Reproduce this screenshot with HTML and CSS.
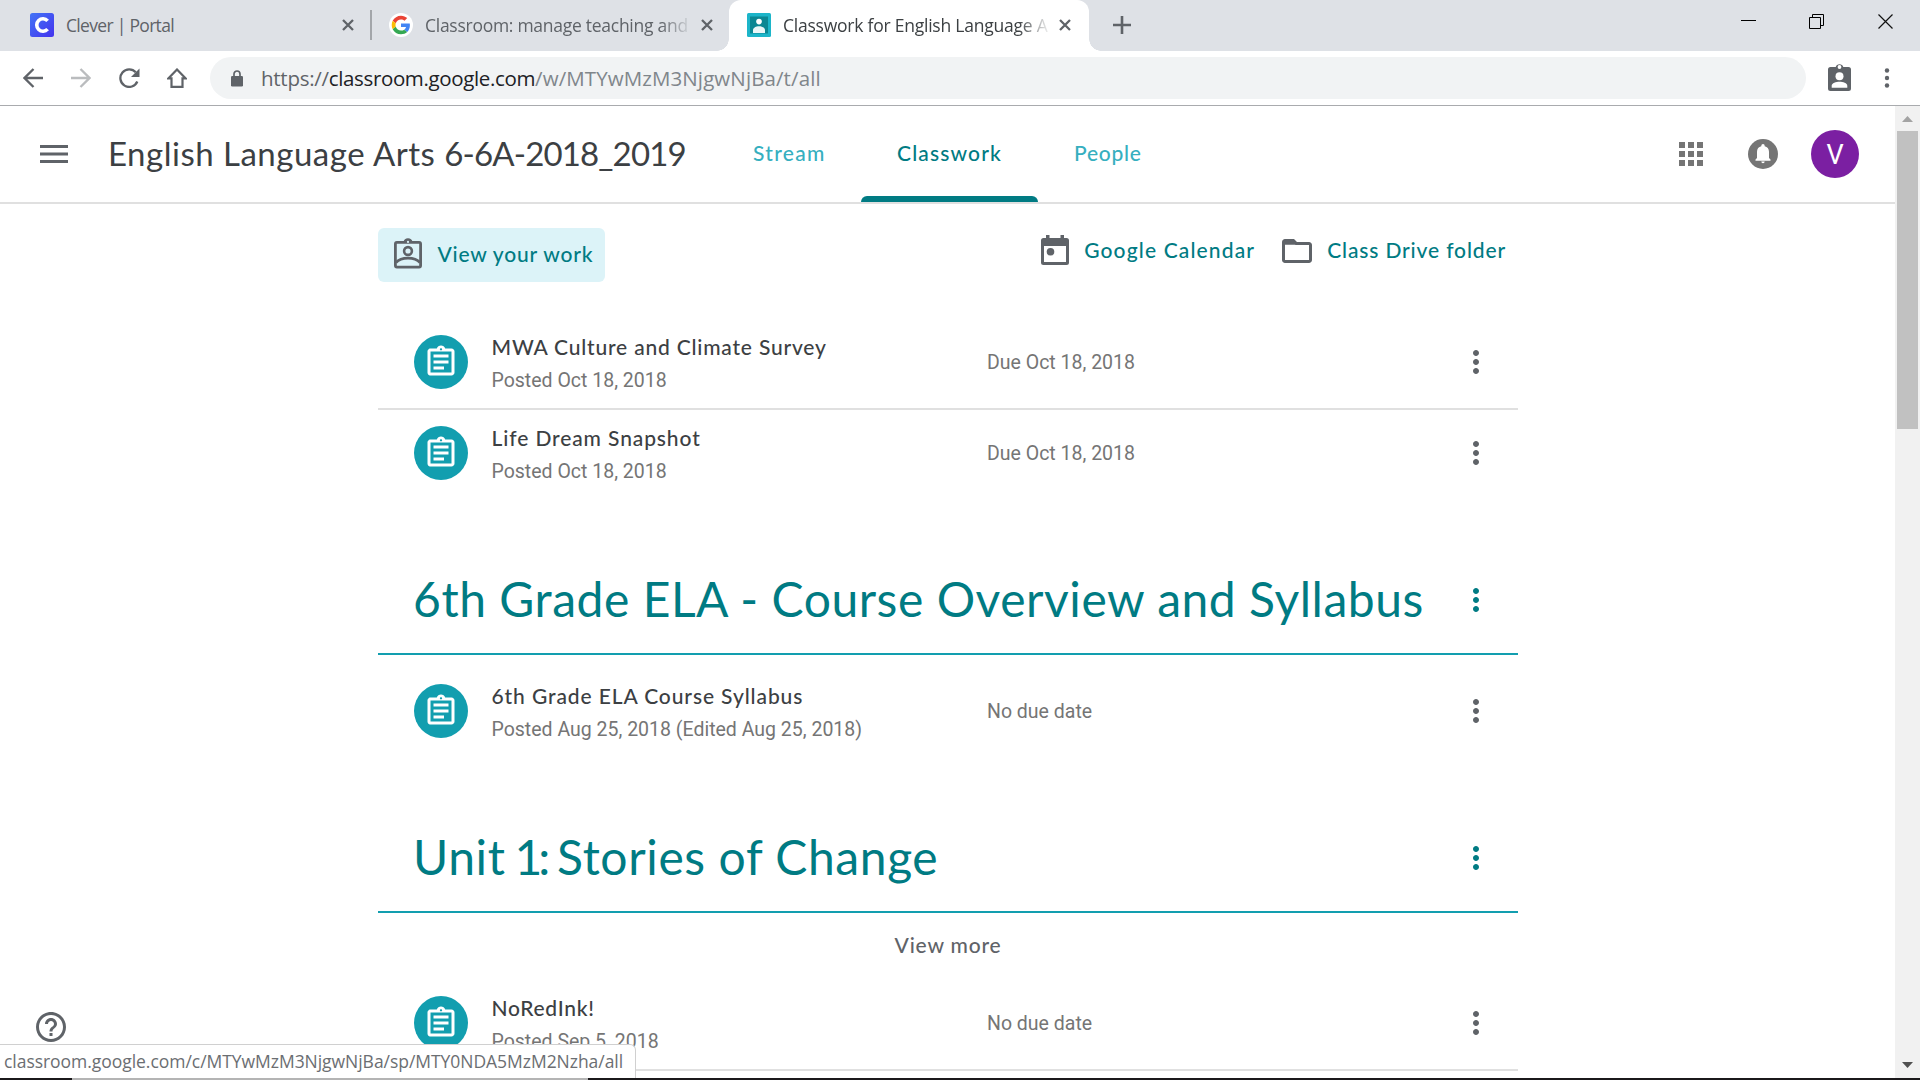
FILE: index.html
```html
<!DOCTYPE html>
<html lang="en">
<head>
<meta charset="utf-8">
<title>Classwork for English Language Arts 6-6A-2018_2019</title>
<link rel="stylesheet" href="styles.css">
</head>
<body>
<svg class="defs" width="0" height="0">
  <symbol id="assignment" viewBox="0 0 24 24"><path d="M7 15h7v2H7zm0-4h10v2H7zm0-4h10v2H7zm12-4h-4.180C14.400 1.840 13.300 1 12 1s-2.400.84-2.820 2H5c-.14 0-.27.01-.4.04-.39.08-.74.28-1.010.55-.18.18-.33.4-.43.64S3 4.720 3 5v14c0 .27.06.54.16.78s.25.45.43.64c.27.27.62.47 1.010.55.13.02.26.03.4.03h14c1.100 0 2-.9 2-2V5c0-1.100-.9-2-2-2zm-7-.25c.41 0 .75.34.75.75s-.34.75-.75.75-.75-.34-.75-.75.34-.75.75-.75zM19 19H5V5h14v14z"/></symbol>
  <symbol id="more" viewBox="0 0 24 24"><path d="M12 8c1.100 0 2-.9 2-2s-.9-2-2-2-2 .9-2 2 .9 2 2 2zm0 2c-1.100 0-2 .9-2 2s.9 2 2 2 2-.9 2-2-.9-2-2-2zm0 6c-1.100 0-2 .9-2 2s.9 2 2 2 2-.9 2-2-.9-2-2-2z"/></symbol>
  <symbol id="close" viewBox="0 0 14 14"><path d="M2 2l10 10M12 2L2 12" fill="none" stroke="#5f6368" stroke-width="2.300"/></symbol>
</svg>

<div class="tabstrip">
  <div class="tab tab-first">
    <svg class="favicon" viewBox="0 0 24 24"><defs><linearGradient id="cg" x1="0" y1="0" x2="1" y2="1"><stop offset="0" stop-color="#4274f6"/><stop offset="1" stop-color="#4433ee"/></linearGradient></defs><rect width="24" height="24" rx="2.500" fill="url(#cg)"/><path d="M17.600 7.900A6.200 6.200 0 1 0 17.600 16.100" fill="none" stroke="#fff" stroke-width="3.600"/></svg>
    <span class="tab-title clever">Clever | Portal</span>
    <svg class="tab-close"><use href="#close"/></svg>
  </div>
  <div class="tab tab-second">
    <svg class="favicon" viewBox="0 0 24 24"><circle cx="12" cy="12" r="12" fill="#fff"/><g transform="translate(2.700 2.700) scale(.3875)"><path fill="#EA4335" d="M24 9.500c3.540 0 6.710 1.220 9.210 3.600l6.850-6.850C35.900 2.380 30.470 0 24 0 14.620 0 6.510 5.380 2.560 13.220l7.980 6.190C12.430 13.720 17.740 9.500 24 9.500z"/><path fill="#4285F4" d="M46.980 24.550c0-1.570-.15-3.090-.38-4.550H24v9.020h12.940c-.58 2.960-2.260 5.480-4.780 7.180l7.730 6c4.510-4.180 7.090-10.360 7.090-17.650z"/><path fill="#FBBC05" d="M10.530 28.590c-.48-1.450-.76-2.990-.76-4.590s.27-3.140.76-4.590l-7.980-6.190C.92 16.460 0 20.120 0 24c0 3.880.92 7.540 2.560 10.780l7.970-6.190z"/><path fill="#34A853" d="M24 48c6.480 0 11.930-2.130 15.890-5.810l-7.730-6c-2.150 1.450-4.920 2.300-8.160 2.300-6.260 0-11.570-4.220-13.470-9.910l-7.980 6.190C6.510 42.620 14.620 48 24 48z"/></g></svg>
    <span class="tab-title fade manage">Classroom: manage teaching and</span>
    <svg class="tab-close"><use href="#close"/></svg>
  </div>
  <div class="tab tab-active">
    <svg class="favicon" viewBox="0 0 24 24"><rect width="24" height="24" rx="1.500" fill="#1cb5c9"/><rect x="3" y="3.500" width="18" height="17" fill="#0b8793"/><circle cx="12" cy="8.600" r="2.800" fill="#fff"/><path d="M6 20v-3c0-2.200 3-3.800 6-3.800s6 1.600 6 3.800v3z" fill="#e9f6f7"/></svg>
    <span class="tab-title fade classwork-tab">Classwork for English Language A</span>
    <svg class="tab-close"><use href="#close"/></svg>
  </div>
  <svg class="new-tab" viewBox="0 0 18 18"><path d="M9 0v18M0 9h18" stroke="#5f6368" stroke-width="2.600"/></svg>
  <svg class="window-controls" viewBox="0 0 152 15"><path d="M0 6.500h15" stroke="#000"/><path d="M68.500 3.500h11v11h-11zM71.500 3.500v-3h11v11h-3" fill="none" stroke="#000"/><path d="M137.500.5l14 14M151.500.5l-14 14" stroke="#111" stroke-width="1.200"/></svg>
</div>

<div class="toolbar">
  <svg class="nav-back" viewBox="0 0 20 20"><path d="M20 10H2M10.500 1L1.500 10l9 9" fill="none" stroke="#5f6368" stroke-width="2.300"/></svg>
  <svg class="nav-forward" viewBox="0 0 20 20"><path d="M0 10h18M9.500 1l9 9-9 9" fill="none" stroke="#babcbe" stroke-width="2.300"/></svg>
  <svg class="nav-reload" viewBox="0 0 21 20"><path d="M18.300 13.500A8.800 8.800 0 1 1 16.800 4.300" fill="none" stroke="#5f6368" stroke-width="2.300"/><path d="M20.500 .5v8.500h-8.500z" fill="#5f6368"/></svg>
  <svg class="nav-home" viewBox="0 0 20 20"><path d="M10 1.500L1.500 10.300h3v8.600h11v-8.600h3z" fill="none" stroke="#5f6368" stroke-width="2.200"/></svg>
  <div class="omnibox">
    <svg class="lock" viewBox="0 0 12 17"><rect y="6" width="12" height="10.500" rx="1.300" fill="#5f6368"/><path d="M3 7V4a3 3 0 0 1 6 0v3" fill="none" stroke="#5f6368" stroke-width="1.700"/></svg>
    <span class="url"><span class="scheme">https://</span><span class="host">classroom.google.com</span><span class="path">/w/MTYwMzM3NjgwNjBa/t/all</span></span>
  </div>
  <svg class="profile" viewBox="0 0 23 28"><path d="M2.500 4h5.200a4 4 0 0 1 7.600 0h5.200A2.500 2.500 0 0 1 23 6.500v19a2.500 2.500 0 0 1-2.500 2.500h-18A2.500 2.500 0 0 1 0 25.500v-19A2.500 2.500 0 0 1 2.500 4z" fill="#5f6368"/><circle cx="11.500" cy="4" r="1.900" fill="#fff"/><circle cx="11.500" cy="13.200" r="4" fill="#fff"/><path d="M3.700 24.800v-2c0-2.600 4.300-4 7.800-4s7.800 1.400 7.800 4v2z" fill="#fff"/></svg>
  <svg class="menu-dots" viewBox="0 0 6 20"><g fill="#5f6368"><circle cx="3" cy="2.500" r="2.200"/><circle cx="3" cy="10" r="2.200"/><circle cx="3" cy="17.500" r="2.200"/></g></svg>
</div>

<div class="viewport">
  <div class="page">
    <header class="app-header">
      <svg class="hamburger" viewBox="0 0 28 18"><path d="M0 1.500h28M0 9h28M0 16.500h28" stroke="#5f6368" stroke-width="3"/></svg>
      <h1 class="class-name">English Language Arts <span class="class-code">6-6A-2018_2019</span></h1>
      <nav class="nav">
        <a class="nav-item stream">Stream</a>
        <a class="nav-item selected">Classwork</a>
        <a class="nav-item people">People</a>
      </nav>
      <div class="account">
        <svg class="apps" viewBox="0 0 24 24"><path fill="#757575" d="M0 0h6v6H0zM9 0h6v6H9zM18 0h6v6h-6zM0 9h6v6H0zM9 9h6v6H9zM18 9h6v6h-6zM0 18h6v6H0zM9 18h6v6H9zM18 18h6v6h-6z"/></svg>
        <svg class="bell" viewBox="0 0 30 30"><circle cx="15" cy="15" r="15" fill="#757575"/><path d="M7.500 21.800v-1.300L9 19v-6.300c0-3 1.700-4.900 4.300-5.500v-.5a1.700 1.700 0 0 1 3.400 0v.5c2.600.6 4.300 2.500 4.300 5.500V19l1.500 1.500v1.300zM13.300 22.600h3.400a1.700 1.700 0 0 1-3.400 0z" fill="#fff"/></svg>
        <span class="avatar">V</span>
      </div>
    </header>

    <main class="content">
      <div class="actions">
        <a class="view-work">
          <svg class="work-icon" viewBox="0 0 28 31"><g fill="none" stroke="#5f6368"><rect x="1.400" y="4.400" width="25.200" height="24.700" rx="1.500" stroke-width="2.800"/><circle cx="14" cy="13" r="3.900" stroke-width="2.600"/><path d="M2 24.500c3-3.300 7.500-4.300 12-4.300s9 1 12 4.300" stroke-width="2.700"/></g><path d="M9.500 4a4.600 4.600 0 0 1 9 0z" fill="#5f6368"/><circle cx="14" cy="3.900" r="1.100" fill="#dcf3f8"/></svg>
          <span class="view-work-label">View your work</span>
        </a>
        <div class="shortcuts">
          <a class="shortcut">
            <svg class="cal-icon" viewBox="0 0 28 31"><path d="M5 0h3.500v3h11V0H23v3h2.500A2.500 2.500 0 0 1 28 5.500v22a2.500 2.500 0 0 1-2.500 2.500h-23A2.500 2.500 0 0 1 0 27.500v-22A2.500 2.500 0 0 1 2.500 3H5zM3 11v16h22V11z" fill="#5f6368" fill-rule="evenodd"/><circle cx="9.500" cy="16.800" r="3.800" fill="#5f6368"/></svg>
            <span class="cal-label">Google Calendar</span>
          </a>
          <a class="shortcut">
            <svg class="folder-icon" viewBox="2 4 20 16"><path fill="#5f6368" d="M9.170 6l2 2H20v10H4V6h5.170M10 4H4c-1.100 0-1.990.9-1.990 2L2 18c0 1.100.9 2 2 2h16c1.100 0 2-.9 2-2V8c0-1.100-.9-2-2-2h-8l-2-2z"/><path fill="#5f6368" d="M3 5h7l2 2.800H3z"/></svg>
            <span class="folder-label">Class Drive folder</span>
          </a>
        </div>
      </div>

      <section class="items">
        <article class="item">
          <span class="badge"><svg><use href="#assignment"/></svg></span>
          <div class="item-text"><h3 class="t-survey">MWA Culture and Climate Survey</h3><p>Posted Oct 18, 2018</p></div>
          <span class="due">Due Oct 18, 2018</span>
          <svg class="more"><use href="#more"/></svg>
        </article>
        <article class="item last">
          <span class="badge"><svg><use href="#assignment"/></svg></span>
          <div class="item-text"><h3 class="t-dream">Life Dream Snapshot</h3><p>Posted Oct 18, 2018</p></div>
          <span class="due">Due Oct 18, 2018</span>
          <svg class="more"><use href="#more"/></svg>
        </article>
      </section>

      <section>
        <div class="topic"><h2 class="t-overview">6th Grade ELA - Course Overview and Syllabus</h2><svg class="more"><use href="#more"/></svg></div>
        <div class="topic-items">
          <article class="item last">
            <span class="badge"><svg><use href="#assignment"/></svg></span>
            <div class="item-text"><h3 class="t-syllabus">6th Grade ELA Course Syllabus</h3><p>Posted Aug 25, 2018 (Edited Aug 25, 2018)</p></div>
            <span class="due">No due date</span>
            <svg class="more"><use href="#more"/></svg>
          </article>
        </div>
      </section>

      <section>
        <div class="topic"><h2 class="t-unit">Unit <span class="unit-number">1:</span> Stories of Change</h2><svg class="more"><use href="#more"/></svg></div>
        <a class="view-more">View more</a>
        <article class="item">
          <span class="badge"><svg><use href="#assignment"/></svg></span>
          <div class="item-text"><h3 class="t-ink">NoRedInk!</h3><p>Posted Sep 5, 2018</p></div>
          <span class="due">No due date</span>
          <svg class="more"><use href="#more"/></svg>
        </article>
      </section>
    </main>
  </div>
  <div class="scrollbar">
    <svg class="arrow-up" viewBox="0 0 11 6"><path d="M5.500 0L11 6H0z" fill="#a3a3a3"/></svg>
    <div class="thumb"></div>
    <svg class="arrow-down" viewBox="0 0 11 6"><path d="M5.500 6L11 0H0z" fill="#505050"/></svg>
  </div>
  <svg class="help" viewBox="2 2 20 20"><path fill="#5f6368" d="M11 18h2v-2h-2v2zm1-16C6.480 2 2 6.480 2 12s4.480 10 10 10 10-4.480 10-10S17.520 2 12 2zm0 18c-4.410 0-8-3.590-8-8s3.590-8 8-8 8 3.590 8 8-3.590 8-8 8zm0-14c-2.210 0-4 1.790-4 4h2c0-1.100.9-2 2-2s2 .9 2 2c0 2-3 1.750-3 5h2c0-2.250 3-2.500 3-5 0-2.210-1.790-4-4-4z"/></svg>
  <div class="status">classroom.google.com/c/MTYwMzM3NjgwNjBa/sp/MTY0NDA5MzM2Nzha/all</div>
</div>
<div class="taskbar-edge"><span class="edge-light"></span></div>
</body>
</html>
```
FILE: styles.css
```css
* { box-sizing: border-box; }
body {
  margin: 0;
  width: 1920px;
  height: 1080px;
  overflow: hidden;
  background: #fff;
  font-family: Roboto, sans-serif;
  display: flex;
  flex-direction: column;
}
h1, h2, h3, p { margin: 0; font-weight: 400; }
svg { display: block; flex: none; }
.defs { position: absolute; }

/* Browser tab strip */
.tabstrip {
  height: 51px;
  flex: none;
  background: #dee1e6;
  display: flex;
  align-items: flex-start;
  font-family: "Open Sans", "Noto Sans", sans-serif;
}
.tab { height: 51px; display: flex; align-items: center; flex: none; padding-bottom: 1px; }
.tab-first { width: 372px; padding-left: 30px; }
.tab-first::after {
  content: "";
  width: 1.5px;
  height: 30px;
  margin-left: 15px;
  background: #a3a6aa;
}
.tab-second { width: 357px; padding-left: 17px; }
.tab-active {
  width: 360px;
  padding-left: 18px;
  background: #fff;
  border-radius: 12px 12px 0 0;
  position: relative;
}
.tab-active::before, .tab-active::after {
  content: "";
  position: absolute;
  bottom: 0;
  width: 12px;
  height: 12px;
}
.tab-active::before { left: -12px; background: radial-gradient(circle at 0 0, transparent 11.5px, #fff 12px); }
.tab-active::after { right: -12px; background: radial-gradient(circle at 100% 0, transparent 11.5px, #fff 12px); }
.favicon { width: 24px; height: 24px; }
.tab-title {
  width: 270px;
  margin: -1px 0 0 12px;
  font-size: 17.5px;
  line-height: 24px;
  color: #5f6368;
  white-space: nowrap;
}
.clever { width: 275px; letter-spacing: -0.69px; }
.manage { letter-spacing: -0.27px; }
.classwork-tab { color: #3c4043; letter-spacing: -0.23px; }
.fade { -webkit-mask-image: linear-gradient(to right, #000 235px, transparent 268px); }
.tab-close { width: 14px; height: 14px; }
.tab-second .tab-close { margin-left: 5px; }
.tab-active .tab-close { margin-left: 5px; }
.new-tab { width: 18px; height: 18px; margin: 16px 0 0 24px; }
.window-controls { width: 152px; height: 15px; margin: 14px 27px 0 auto; }

/* Address bar */
.toolbar {
  height: 55px;
  flex: none;
  display: flex;
  align-items: center;
  border-bottom: 1px solid #a9abae;
  padding-left: 23px;
}
.nav-back, .nav-forward, .nav-home { width: 20px; height: 20px; }
.nav-forward { margin-left: 28px; }
.nav-reload { width: 21px; height: 20px; margin-left: 28px; }
.nav-home { margin-left: 27px; }
.omnibox {
  width: 1596px;
  height: 42px;
  margin-left: 23px;
  border-radius: 21px;
  background: #f1f3f4;
  display: flex;
  align-items: center;
  padding-left: 21px;
}
.lock { width: 12px; height: 17px; }
.url {
  margin-left: 18px;
  font-family: "Open Sans", "Noto Sans", sans-serif;
  font-size: 20.5px;
  line-height: 30px;
  white-space: nowrap;
}
.scheme { color: #5f6368; letter-spacing: -0.27px; }
.host { color: #202124; letter-spacing: -0.36px; }
.path { color: #80868b; letter-spacing: 0.1px; }
.profile { width: 23px; height: 28px; margin: -2px 0 0 22px; }
.menu-dots { width: 6px; height: 20px; margin-left: 33px; }

/* Web page area */
.viewport { height: 972px; flex: none; display: flex; position: relative; overflow: hidden; }
.page { width: 1895px; height: 972px; overflow: hidden; }
.app-header {
  height: 98px;
  border-bottom: 2px solid #e0e0e0;
  display: flex;
  align-items: center;
  padding: 0 36px 0 40px;
  font-family: Lato, sans-serif;
}
.hamburger { width: 28px; height: 18px; }
.class-name {
  width: 643px;
  margin: -2px 0 0 40px;
  font-size: 33px;
  line-height: 44px;
  letter-spacing: 0.5px;
  color: #3c4043;
  white-space: nowrap;
}
.class-code { letter-spacing: -0.85px; }
.nav { display: flex; height: 96px; font-size: 21px; font-weight: 500; line-height: 94px; color: #36afbf; }
.nav-item { text-align: center; }
.stream { width: 110px; padding-left: 2px; text-align: left; letter-spacing: 1.3px; }
.selected {
  width: 177px;
  color: #007b83;
  letter-spacing: 1.15px;
  display: flex;
  flex-direction: column;
  height: 96px;
}
.selected::after {
  content: "";
  height: 6px;
  margin-top: -4px;
  flex: none;
  background: #007b83;
  border-radius: 6px 6px 0 0;
}
.people { margin-left: 36px; letter-spacing: 0.75px; }
.account { display: flex; align-items: center; margin-left: auto; }
.apps { width: 24px; height: 24px; }
.bell { width: 30px; height: 30px; margin-left: 45px; }
.avatar {
  width: 48px;
  height: 48px;
  margin-left: 33px;
  border-radius: 50%;
  background: #7b1fa2;
  color: #fff;
  font: 400 27px/50px Roboto, sans-serif;
  text-align: center;
}

.content { width: 1140px; margin-left: 378px; padding-top: 24px; }
.actions {
  display: flex;
  justify-content: space-between;
  align-items: flex-start;
  font: 500 21px/30px Lato, sans-serif;
  color: #007b83;
  white-space: nowrap;
}
.view-work {
  width: 227px;
  height: 54px;
  padding-left: 16px;
  border-radius: 6px;
  background: #dcf3f8;
  display: flex;
  align-items: center;
}
.work-icon { width: 28px; height: 31px; margin-top: -3px; }
.view-work-label { margin: -2px 0 0 15.5px; letter-spacing: 0.8px; }
.shortcuts { display: flex; height: 46px; padding-right: 12px; gap: 27px; }
.shortcut { display: flex; align-items: center; }
.cal-icon { width: 28px; height: 31px; margin-top: -2px; }
.cal-label { margin: -2px 0 0 15px; letter-spacing: 1.15px; }
.folder-icon { width: 30px; height: 24px; }
.folder-label { margin: -2px 0 0 15px; letter-spacing: 0.86px; }

.items { margin-top: 37px; }
.item {
  height: 91px;
  padding: 16px 28px 0 36px;
  border-bottom: 2px solid #e0e0e0;
  display: flex;
  align-items: flex-start;
  white-space: nowrap;
}
.item.last { border-bottom-color: transparent; }
.badge {
  width: 54px;
  height: 54px;
  border-radius: 50%;
  background: #129eaf;
  display: flex;
  align-items: center;
  justify-content: center;
}
.badge svg { width: 36px; height: 36px; fill: #fff; }
.item-text { width: 495.5px; margin: -1px 0 0 23.5px; }
.item-text h3 { font: 500 21px/26px Lato, sans-serif; color: #3c4043; }
.item-text p { margin-top: 8px; font-size: 19.5px; line-height: 26px; color: #757575; }
.item-text .t-survey { letter-spacing: 0.8px; }
.item-text .t-dream { letter-spacing: 0.89px; }
.item-text .t-syllabus { letter-spacing: 0.9px; }
.item-text .t-ink { letter-spacing: 0.7px; }
.due { font-size: 19.5px; line-height: 56px; color: #757575; }
.more { width: 36px; height: 36px; margin: 9px -4px 0 auto; fill: #5f6368; }

.topic {
  height: 110px;
  margin-top: 44px;
  padding: 0 24px 0 36px;
  border-bottom: 2px solid #129eaf;
  display: flex;
  align-items: center;
}
.topic h2 { margin-left: -1px; font: 400 48px/60px Lato, sans-serif; color: #007b83; white-space: nowrap; }
.topic .more { margin: 2px 0 0 auto; fill: #007b83; }
.topic .t-overview { letter-spacing: 0.54px; }
.topic .t-unit { letter-spacing: 0.6px; }
.unit-number { margin: 0 -2px 0 -4px; letter-spacing: -4px; }
.topic-items { margin-top: 13px; }
.view-more {
  display: block;
  height: 67px;
  font: 500 21px/63px Lato, sans-serif;
  letter-spacing: 0.8px;
  color: #5f6368;
  text-align: center;
}

.scrollbar {
  width: 25px;
  height: 972px;
  background: #f1f1f1;
  display: flex;
  flex-direction: column;
  align-items: center;
  padding: 10px 0;
}
.arrow-up, .arrow-down { width: 11px; height: 6px; }
.thumb { width: 21px; height: 298px; margin-top: 9px; background: #c1c1c1; }
.arrow-down { margin-top: auto; }

.help { position: absolute; left: 36px; top: 906px; width: 30px; height: 30px; }
.status {
  position: absolute;
  left: 0;
  bottom: 0;
  width: 636px;
  height: 34px;
  padding-left: 4px;
  border: 1px solid #d0d0d0;
  border-left: 0;
  border-bottom: 0;
  border-radius: 0 6px 0 0;
  background: #fff;
  color: #6b6e72;
  font: 400 17.5px/33px "Open Sans", "Noto Sans", sans-serif;
  letter-spacing: -0.04px;
  white-space: nowrap;
}
.taskbar-edge { height: 2px; flex: none; background: #1b191b; padding-left: 72px; }
.edge-light { display: block; width: 516px; height: 2px; background: #b4b4b4; }
```
